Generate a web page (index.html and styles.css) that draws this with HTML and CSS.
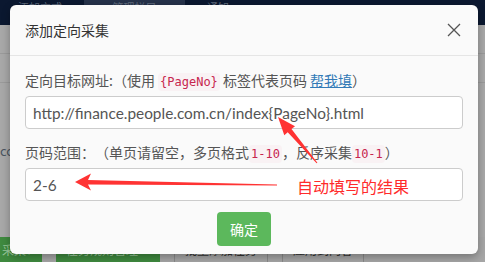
FILE: index.html
```html
<!DOCTYPE html>
<html lang="zh-CN">
<head>
    <meta charset="UTF-8">
    <meta name="viewport" content="width=device-width, initial-scale=1.0">
    <title>添加定向采集</title>
    <link rel="stylesheet" href="styles.css">
</head>
<body>
    <!-- 背景页面（被遮罩） -->
    <div class="page">
        <div class="topnav">
            <span class="nav-item">添加方式</span>
            <span class="nav-item nav-active">管理栏目</span>
            <span class="nav-item">通知</span>
        </div>
        <div class="page-body">
            <div class="side-line"></div>
            <div class="side-line"></div>
            <div class="side-text">cc</div>
        </div>
        <div class="page-foot">
            <span class="foot-btn foot-green small">采集▾</span>
            <span class="foot-btn foot-green">任务规则管理</span>
            <span class="foot-btn">批量添加任务</span>
            <span class="foot-btn">应用到内容</span>
        </div>
    </div>

    <div class="modal">
        <div class="modal-header">
            <h4 class="modal-title">添加定向采集</h4>
            <svg class="modal-close" width="14" height="14" viewBox="0 0 14 14">
                <path d="M1 1 L13 13 M13 1 L1 13" stroke="#555" stroke-width="1.3" fill="none"/>
            </svg>
        </div>

        <div class="modal-body">
            <div class="form-group">
                <label class="form-label">定向目标网址:（使用 <code>{PageNo}</code> 标签代表页码 <a href="#" class="help-link">帮我填</a>）</label>
                <input type="text" class="form-input" value="http://finance.people.com.cn/index{PageNo}.html">
            </div>

            <div class="form-group">
                <label class="form-label">页码范围：（单页请留空，多页格式<code>1-10</code>，反序采集<code>10-1</code>）</label>
                <input type="text" class="form-input" value="2-6">
            </div>

            <div class="form-actions">
                <button type="button" class="btn-ok">确定</button>
            </div>
        </div>
    </div>

    <!-- 标注 -->
    <svg class="marks" width="485" height="262" viewBox="0 0 485 262">
        <polygon fill="#f33" points="278,117 295,126.2 291.5,129.1 317.4,162.7 316.6,163.3 287.7,132.3 284.3,135.2"/>
        <polygon fill="#f33" points="75,182 91,173.5 88,180 277,184.5 277,185.5 88,184.5 91,190.5"/>
    </svg>
    <div class="mark-text">自动填写的结果</div>
</body>
</html>
```

FILE: styles.css
```css
* {
    margin: 0;
    padding: 0;
    box-sizing: border-box;
}

body {
    width: 485px;
    height: 262px;
    overflow: hidden;
    position: relative;
    font-family: "Noto Sans CJK SC", sans-serif;
    background: #a6a6a6;
}

/* background page */
.page {
    display: flex;
    flex-direction: column;
    height: 262px;
    overflow: hidden;
}

.topnav {
    height: 25px;
    flex-shrink: 0;
    background: #0b1830;
    display: flex;
    gap: 16px;
    padding-left: 12px;
    font-size: 11px;
    line-height: 14px;
    color: #5f6a7c;
}

.nav-item {
    padding: 0 6px;
}

.nav-active {
    background: #26324a;
    width: 101px;
    text-align: center;
}

.page-body {
    flex: 1;
    min-height: 0;
    background: #a8a8a8;
}

.side-line {
    height: 1px;
    background: #9a9a9a;
    margin-top: 28px;
}

.side-text {
    font-size: 13px;
    line-height: 16px;
    color: #4a5560;
    margin-top: 60px;
}

.page-foot {
    height: 25px;
    flex-shrink: 0;
    display: flex;
    gap: 14px;
    align-items: flex-start;
    background: #a6a6a6;
    font-size: 12px;
    line-height: 14px;
    color: #333;
}

.foot-btn {
    padding: 6px 10px 0;
    border-left: 1px solid #8a8a8a;
    border-right: 1px solid #8a8a8a;
    height: 25px;
    white-space: nowrap;
}

.foot-green {
    background: #3f8a3f;
    color: #9ac89a;
    border: none;
    width: 104px;
}

.foot-green.small {
    width: 42px;
    padding: 6px 2px 0;
}

/* modal */
.modal {
    position: absolute;
    left: 10px;
    top: 5px;
    width: 468px;
    height: 249px;
    background: #fafafa;
    border-radius: 6px;
    box-shadow: 0 3px 8px rgba(0,0,0,0.3);
}

.modal-header {
    height: 51px;
    border-bottom: 1px solid #e5e5e5;
    display: flex;
    align-items: center;
    justify-content: space-between;
    padding: 0 17px 0 15px;
}

.modal-title {
    font-size: 14px;
    font-weight: 400;
    color: #333;
}

.modal-body {
    padding: 14px 15px 14px;
}

.form-group {
    margin-bottom: 13px;
}

.form-label {
    display: block;
    font-size: 14px;
    line-height: 20px;
    color: #555;
    margin-bottom: 4px;
    white-space: nowrap;
    text-spacing-trim: space-all;
}

.form-label code {
    font-family: "DejaVu Sans Mono", monospace;
    font-size: 12px;
    color: #c7254e;
    background: #f9f2f4;
    padding: 2px 2px;
    border-radius: 4px;
}

.help-link {
    color: #337ab7;
    text-decoration: underline;
}

.form-input {
    display: block;
    width: 100%;
    height: 33px;
    padding: 0 7px;
    border: 1px solid #ccc;
    border-radius: 4px;
    background: #fff;
    font-family: Lato, sans-serif;
    font-size: 15.4px;
    color: #555;
}

.form-actions {
    display: flex;
    justify-content: center;
    margin-top: -2px;
}

.btn-ok {
    width: 54px;
    height: 34px;
    border: none;
    border-radius: 4px;
    background: #5cb85c;
    color: #fff;
    font-family: "Noto Sans CJK SC", sans-serif;
    font-size: 14px;
}

/* annotations */
.marks {
    position: absolute;
    left: 0;
    top: 0;
}

.mark-text {
    position: absolute;
    left: 297px;
    top: 175px;
    font-family: "Noto Sans CJK SC", sans-serif;
    font-size: 16px;
    line-height: 22px;
    color: #ff2b2b;
}
```
